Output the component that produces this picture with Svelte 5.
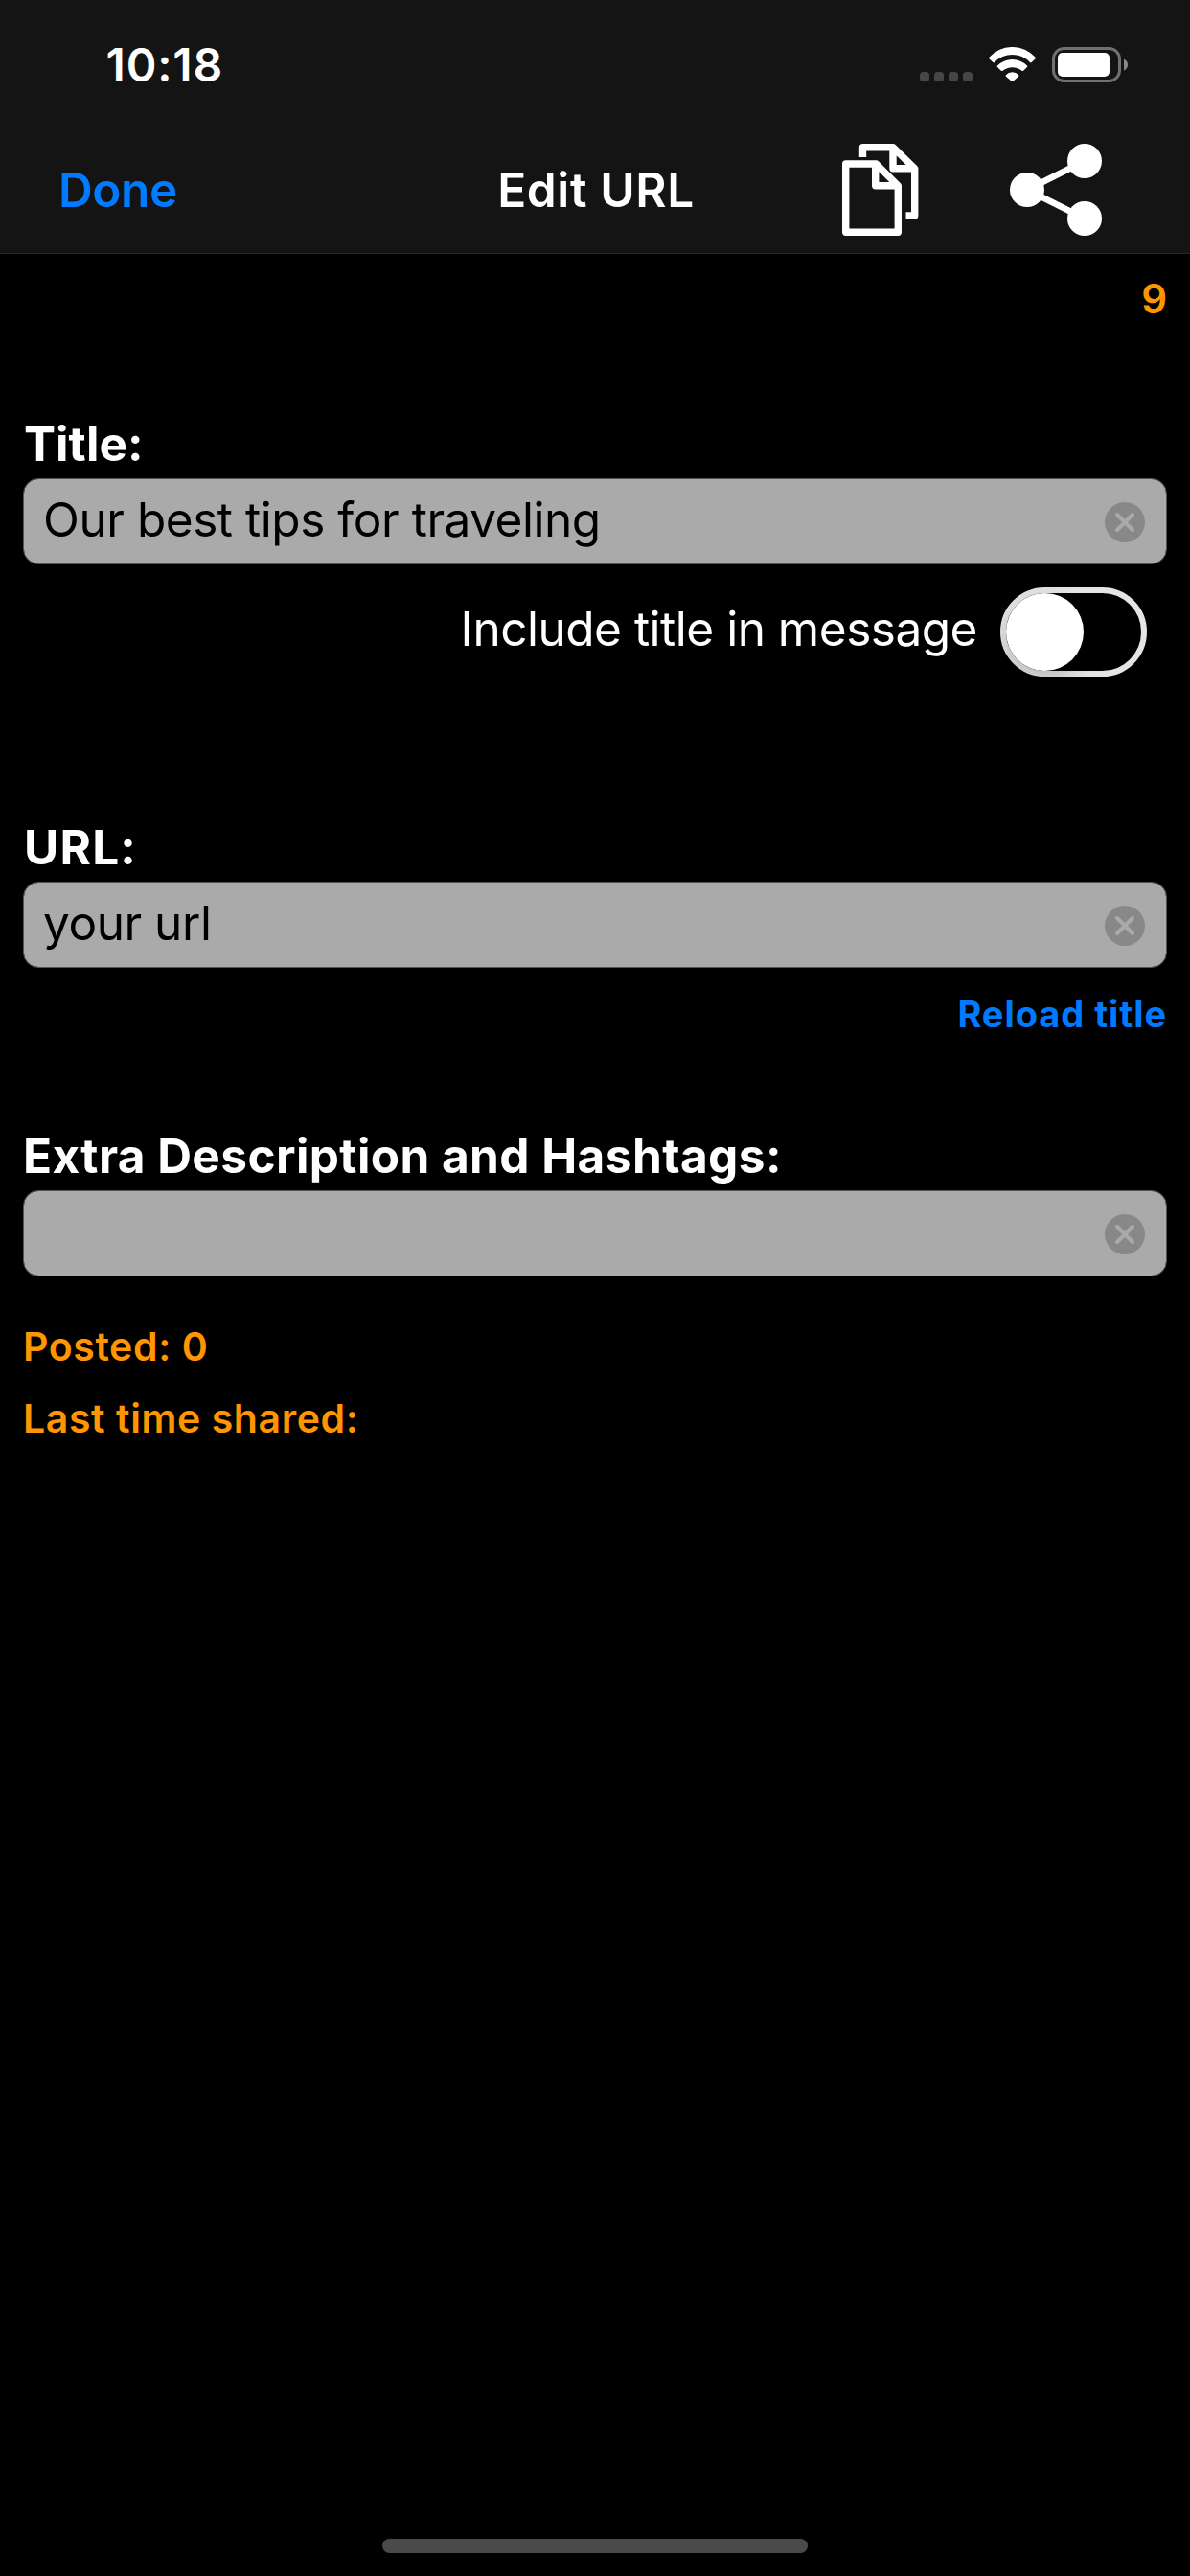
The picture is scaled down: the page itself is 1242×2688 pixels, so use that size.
<script lang="ts">
  let title = $state("Our best tips for traveling");
  let url = $state("your url");
  let description = $state("");
  let includeTitle = $state(false);

  const postedCount = 0;
  const lastShared = "";
  const remaining = 9;
</script>

{#snippet field(value: string, name: string, clear: () => void)}
  <div class="field">
    <span class="value">{value}</span>
    <button class="clear" aria-label="Clear {name}" onclick={clear}>
      <svg viewBox="0 0 42 42" width="42" height="42">
        <circle cx="21" cy="21" r="21" fill="#888" />
        <path d="M13 13L29 29M29 13L13 29" stroke="#aaa" stroke-width="4" stroke-linecap="round" />
      </svg>
    </button>
  </div>
{/snippet}

<div class="screen">
  <header>
    <div class="status-bar">
      <span class="time">10:18</span>
      <div class="status-icons">
        <div class="dots">
          <i></i><i></i><i></i><i></i>
        </div>
        <svg viewBox="0 0 49 37" width="49" height="37" fill="#fff">
          <path d="M.6 10.6A32.2 32.2 0 0 1 48.4 10.6Q49.3 11.5 48.4 12.4L44.6 16.1Q43.8 16.8 43 16.1A25.2 25.2 0 0 0 6 16.1Q5.2 16.8 4.4 16.1L.6 12.4Q-.3 11.5 .6 10.6Z" />
          <path d="M9 19.4A21.9 21.9 0 0 1 40 19.4Q40.8 20.2 40 21L36.1 24.8Q35.3 25.4 34.5 24.7A16 16 0 0 0 14.5 24.7Q13.7 25.4 12.9 24.8L9 21Q8.2 20.2 9 19.4Z" />
          <path d="M17.9 29.2A9 9 0 0 1 31.1 29.2Q31.8 30 31.1 30.7L25.3 35.8Q24.5 36.4 23.7 35.8L17.9 30.7Q17.2 30 17.9 29.2Z" />
        </svg>
        <svg viewBox="0 0 79 37" width="79" height="37">
          <rect x="1.5" y="1.5" width="69" height="34" rx="11" fill="none" stroke="#707070" stroke-width="3" />
          <rect x="6" y="6" width="54" height="25" rx="5" fill="#fff" />
          <path d="M75 12.5Q79 14.5 79 18.5Q79 22.5 75 24.5Z" fill="#8a8a8a" />
        </svg>
      </div>
    </div>
    <nav>
      <button class="done">Done</button>
      <h1>Edit URL</h1>
      <div class="actions">
        <button aria-label="Copy">
          <svg viewBox="0 0 96 96" width="96" height="96" fill="none" stroke="#fff" stroke-width="7.4">
            <path d="M28.5 14V3.7H60L82.7 25.8V75H73.5M60 3.7V25.8H82.7" stroke-linejoin="round" />
            <path d="M42 21H10.7V92.3H65.3V43.8L42.5 21ZM41.7 21V43.8H65.3" stroke-linejoin="round" />
          </svg>
        </button>
        <button aria-label="Share">
          <svg viewBox="0 0 96 96" width="96" height="96" fill="#fff">
            <path d="M78 18L18 48L78 78" fill="none" stroke="#fff" stroke-width="6.5" />
            <circle cx="18" cy="48" r="18" />
            <circle cx="78" cy="18" r="18" />
            <circle cx="78" cy="78" r="18" />
          </svg>
        </button>
      </div>
    </nav>
  </header>

  <main>
    <p class="remaining">{remaining}</p>

    <h2 class="title-label">Title:</h2>
    {@render field(title, "title", () => (title = ""))}
    <div class="include">
      <span>Include title in message</span>
      <button
        class="switch"
        class:on={includeTitle}
        role="switch"
        aria-checked={includeTitle}
        aria-label="Include title in message"
        onclick={() => (includeTitle = !includeTitle)}
      >
        <span class="knob"></span>
      </button>
    </div>

    <h2 class="url-label">URL:</h2>
    {@render field(url, "URL", () => (url = ""))}
    <button class="reload">Reload title</button>

    <h2 class="description-label">Extra Description and Hashtags:</h2>
    {@render field(description, "description", () => (description = ""))}

    <p class="posted">Posted: {postedCount}</p>
    <p class="shared">Last time shared: {lastShared}</p>
  </main>

  <div class="home-indicator"></div>
</div>

<style>
  :global(body) {
    margin: 0;
    background: #000;
  }

  .screen {
    display: flex;
    flex-direction: column;
    box-sizing: border-box;
    width: 1242px;
    height: 2688px;
    padding-bottom: 24px;
    background: #000;
    color: #fff;
    font-family: Inter, "Liberation Sans", sans-serif;
    font-size: 49.5px;
  }

  h1,
  h2,
  p {
    margin: 0;
    font-size: inherit;
  }

  button {
    padding: 0;
    border: 0;
    background: none;
    font: inherit;
    cursor: pointer;
  }

  svg {
    display: block;
  }

  header {
    background: #141414;
    border-bottom: 1px solid #2a2a2a;
  }

  .status-bar {
    display: flex;
    align-items: center;
    justify-content: space-between;
    box-sizing: border-box;
    height: 132px;
    padding: 3px 65px 0 110.5px;
  }

  .time {
    font-size: 48px;
    font-weight: 600;
    letter-spacing: 0.86px;
  }

  .status-icons {
    display: flex;
    align-items: flex-end;
    gap: 17px;
  }

  .dots {
    display: flex;
    gap: 5px;
    padding-bottom: 1px;
  }

  .dots i {
    width: 10px;
    height: 10px;
    border-radius: 3.5px;
    background: #464646;
  }

  nav {
    display: grid;
    grid-template-columns: 1fr auto 1fr;
    align-items: center;
    height: 132px;
  }

  .done {
    justify-self: start;
    padding-left: 61px;
    color: #007aff;
    font-weight: 600;
    letter-spacing: -0.39px;
  }

  h1 {
    padding-left: 2px;
    font-weight: 600;
    letter-spacing: 0.65px;
  }

  .actions {
    display: flex;
    justify-content: flex-end;
    gap: 86px;
    padding-right: 92px;
  }

  main {
    display: flex;
    flex-direction: column;
    flex: 1;
    padding: 17px 24px 0;
  }

  .remaining,
  .posted,
  .shared {
    color: #ff9500;
    font-weight: 600;
  }

  .remaining {
    font-size: 42px;
    line-height: 60px;
    text-align: right;
  }

  .posted,
  .shared {
    font-size: 41px;
    line-height: 50px;
    letter-spacing: 0.6px;
  }

  .posted {
    margin-top: 48px;
  }

  .shared {
    margin-top: 25px;
  }

  h2 {
    font-weight: 700;
    line-height: 60px;
    margin-bottom: 6px;
  }

  .title-label {
    margin-top: 91px;
    padding-left: 1px;
    letter-spacing: 0.08px;
  }

  .url-label {
    margin-top: 148px;
    padding-left: 1px;
    letter-spacing: 1.2px;
  }

  .description-label {
    margin-top: 98px;
    letter-spacing: 0.43px;
  }

  .field {
    display: flex;
    align-items: center;
    justify-content: space-between;
    box-sizing: border-box;
    height: 90px;
    padding: 0 22px 0 20px;
    border: 1px solid #555;
    border-radius: 16px;
    background: #aaa;
    background-clip: padding-box;
  }

  .value {
    padding-bottom: 4px;
    color: #000;
    letter-spacing: -0.45px;
  }

  .clear {
    padding-top: 2px;
  }

  .include {
    display: flex;
    align-items: center;
    justify-content: flex-end;
    gap: 24px;
    height: 93px;
    margin-top: 24px;
    padding-right: 21px;
    letter-spacing: -0.48px;
  }

  .include > span {
    padding-bottom: 7px;
  }

  .switch {
    display: flex;
    box-sizing: border-box;
    width: 153px;
    height: 93px;
    border: 6px solid #e5e5e5;
    border-radius: 47px;
  }

  .switch.on {
    justify-content: flex-end;
    border-color: #34c759;
    background: #34c759;
  }

  .knob {
    width: 81px;
    height: 81px;
    border-radius: 50%;
    background: #fff;
    box-shadow: 0 9px 24px rgba(0, 0, 0, 0.2);
  }

  .reload {
    align-self: flex-end;
    margin-top: 28px;
    color: #007aff;
    font-size: 38px;
    font-weight: 700;
    line-height: 40px;
    letter-spacing: 0.94px;
  }

  .home-indicator {
    align-self: center;
    width: 444px;
    height: 15px;
    border-radius: 8px;
    background: #4a4a4a;
  }
</style>
